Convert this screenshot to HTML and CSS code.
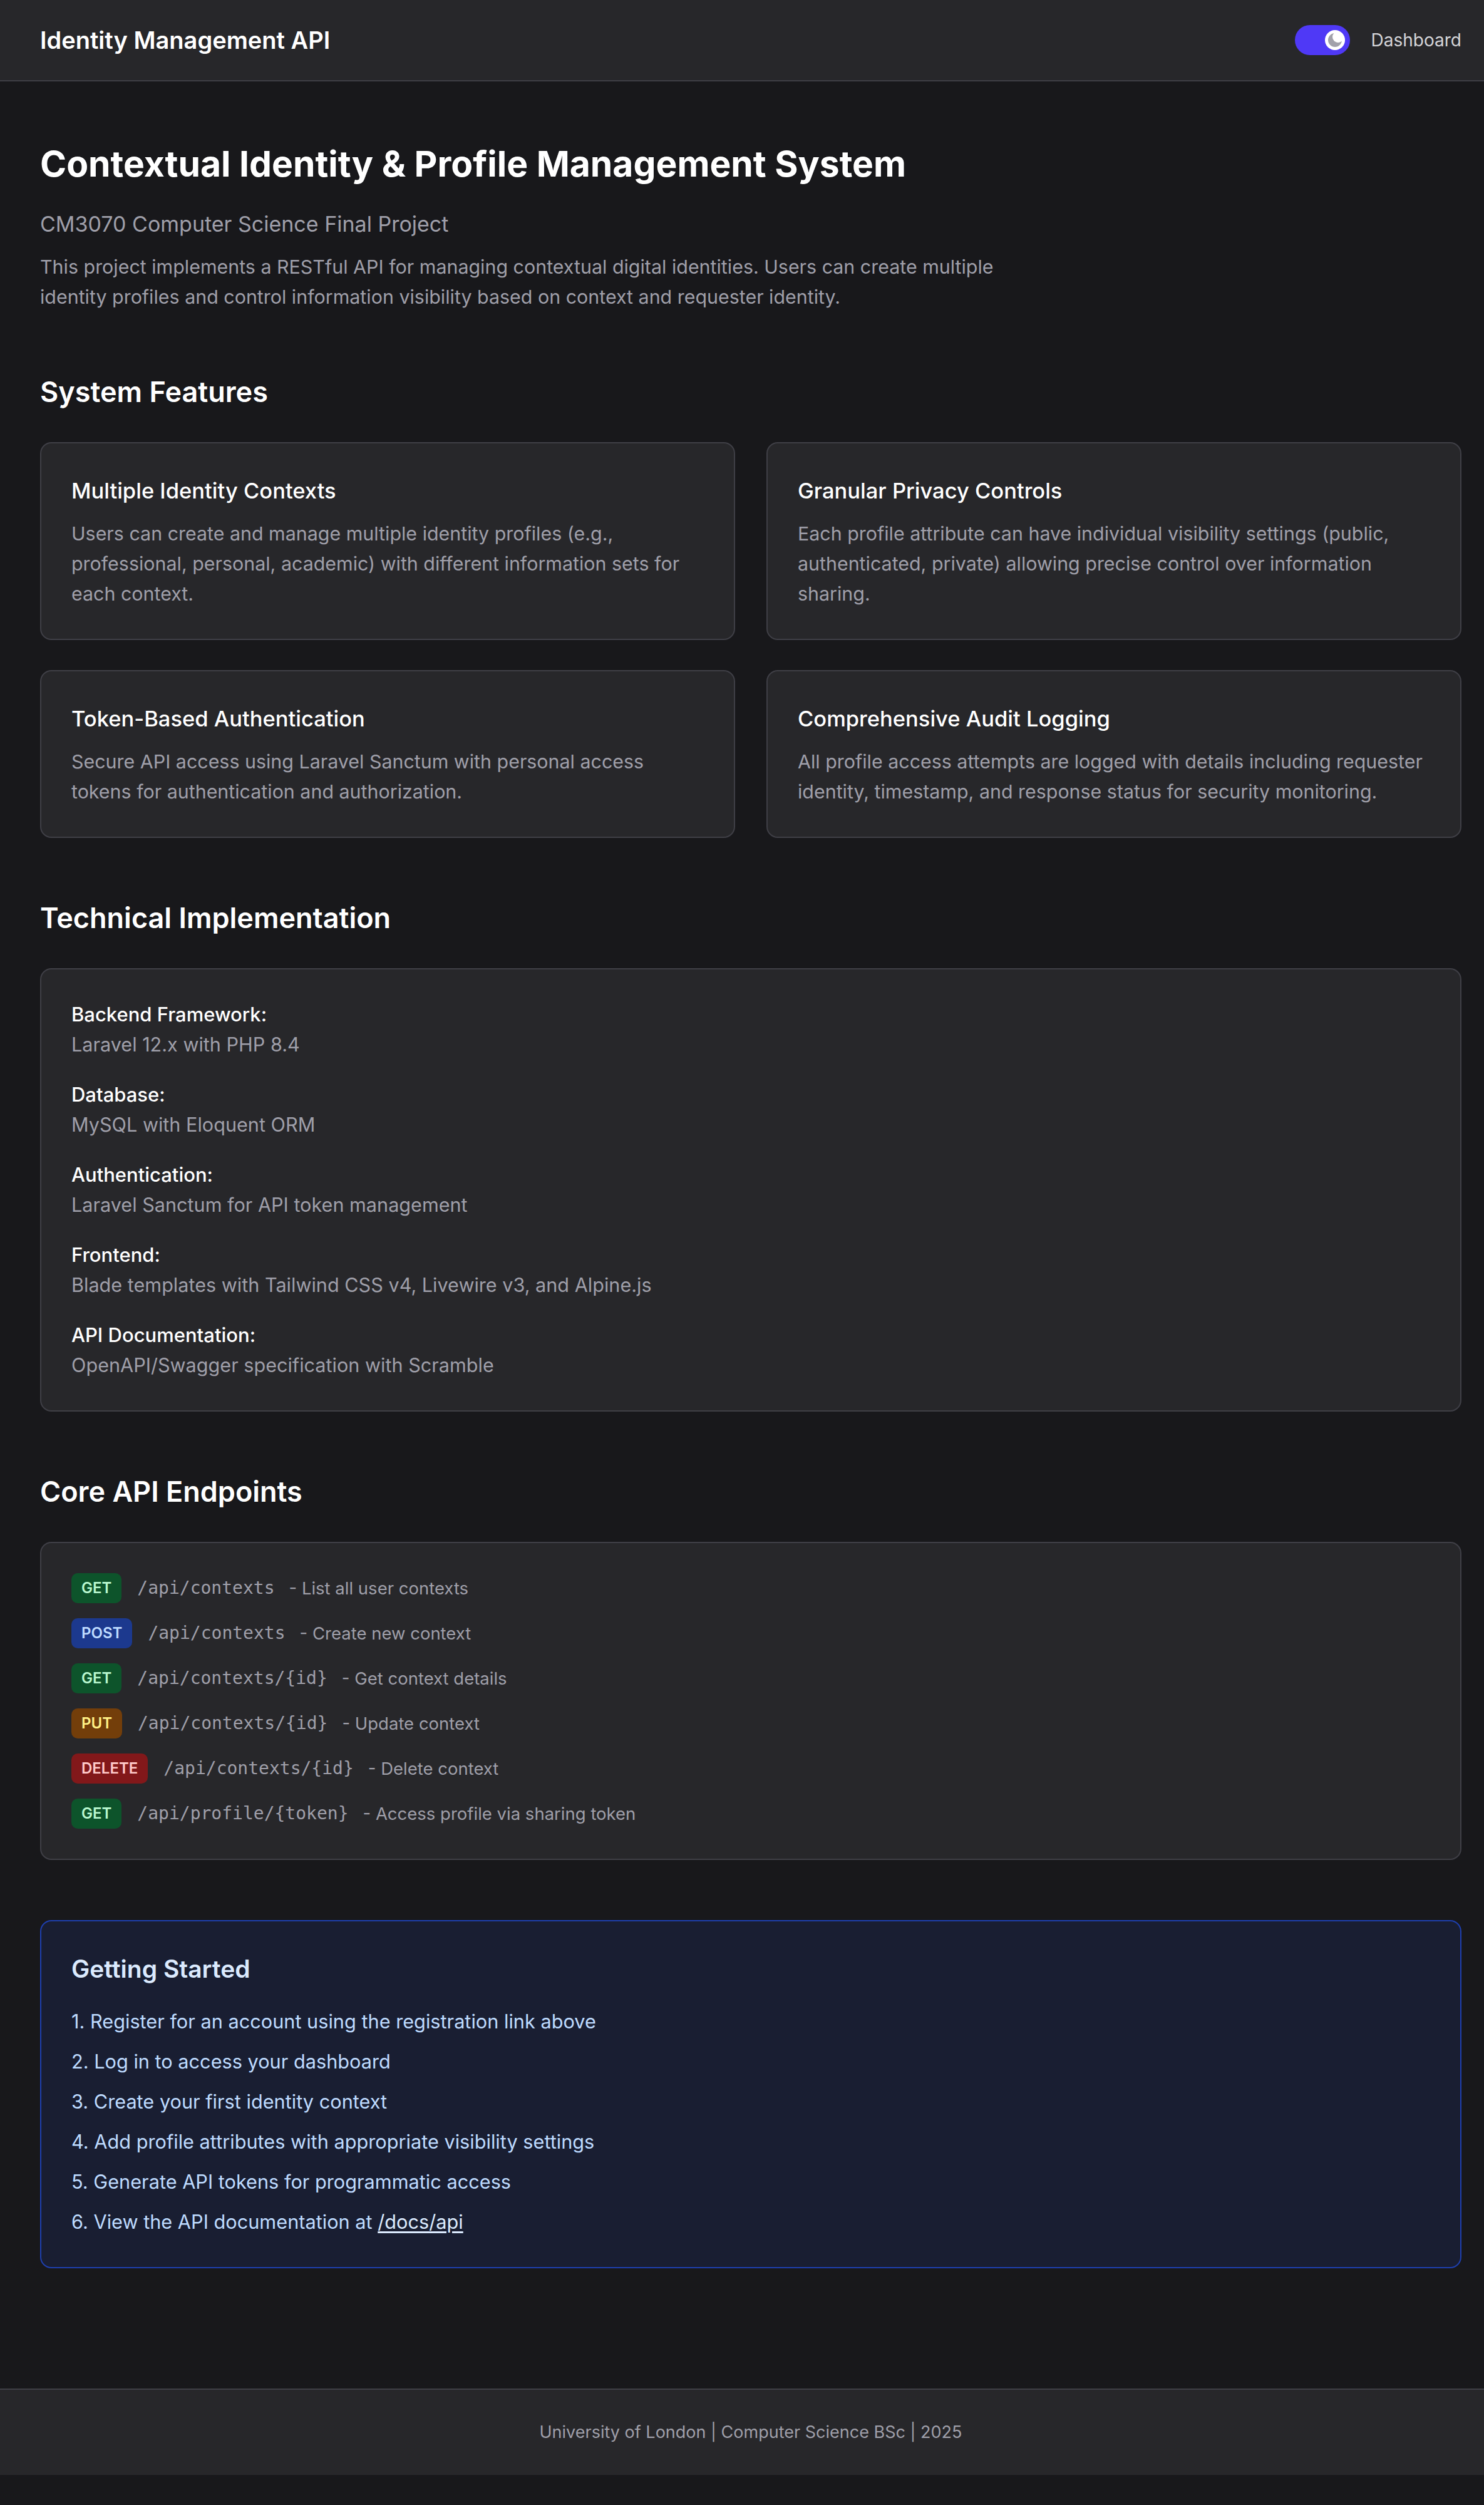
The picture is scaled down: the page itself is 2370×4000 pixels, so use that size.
FILE: index.html
```html
<!DOCTYPE html>
<html lang="en">
<head>
<meta charset="utf-8">
<title>Identity Management API</title>
<link rel="stylesheet" href="styles.css">
</head>
<body>
<header class="topbar">
  <div class="topbar-inner">
    <a class="brand" href="#">Identity Management API</a>
    <div class="nav">
      <button class="toggle" type="button" aria-label="Toggle dark mode">
        <span class="knob">
          <svg viewBox="0 0 24 24" width="24" height="24" aria-hidden="true">
            <circle cx="12" cy="12" r="11" fill="#a1a1aa"/>
            <circle cx="17" cy="7" r="9" fill="#ffffff"/>
          </svg>
        </span>
      </button>
      <a class="nav-link" href="#">Dashboard</a>
    </div>
  </div>
</header>

<main class="main">
  <section class="intro">
    <h1 class="title">Contextual Identity &amp; Profile Management System</h1>
    <p class="subtitle">CM3070 Computer Science Final Project</p>
    <p class="lead">This project implements a RESTful API for managing contextual digital identities. Users can create multiple identity profiles and control information visibility based on context and requester identity.</p>
  </section>

  <section class="section">
    <h2 class="section-title">System Features</h2>
    <div class="feature-grid">
      <div class="card">
        <h3 class="card-title">Multiple Identity Contexts</h3>
        <p class="card-text">Users can create and manage multiple identity profiles (e.g., professional, personal, academic) with different information sets for each context.</p>
      </div>
      <div class="card">
        <h3 class="card-title">Granular Privacy Controls</h3>
        <p class="card-text">Each profile attribute can have individual visibility settings (public, authenticated, private) allowing precise control over information sharing.</p>
      </div>
      <div class="card">
        <h3 class="card-title">Token-Based Authentication</h3>
        <p class="card-text">Secure API access using Laravel Sanctum with personal access tokens for authentication and authorization.</p>
      </div>
      <div class="card">
        <h3 class="card-title">Comprehensive Audit Logging</h3>
        <p class="card-text">All profile access attempts are logged with details including requester identity, timestamp, and response status for security monitoring.</p>
      </div>
    </div>
  </section>

  <section class="section">
    <h2 class="section-title">Technical Implementation</h2>
    <div class="panel tech-list">
      <div class="tech-item">
        <div class="tech-label">Backend Framework:</div>
        <div class="tech-value">Laravel 12.x with PHP 8.4</div>
      </div>
      <div class="tech-item">
        <div class="tech-label">Database:</div>
        <div class="tech-value">MySQL with Eloquent ORM</div>
      </div>
      <div class="tech-item">
        <div class="tech-label">Authentication:</div>
        <div class="tech-value">Laravel Sanctum for API token management</div>
      </div>
      <div class="tech-item">
        <div class="tech-label">Frontend:</div>
        <div class="tech-value">Blade templates with Tailwind CSS v4, Livewire v3, and Alpine.js</div>
      </div>
      <div class="tech-item">
        <div class="tech-label">API Documentation:</div>
        <div class="tech-value">OpenAPI/Swagger specification with Scramble</div>
      </div>
    </div>
  </section>

  <section class="section">
    <h2 class="section-title">Core API Endpoints</h2>
    <div class="panel endpoint-list">
      <div class="endpoint">
        <span class="method method-get">GET</span>
        <code class="path">/api/contexts</code>
        <span class="desc">- List all user contexts</span>
      </div>
      <div class="endpoint">
        <span class="method method-post">POST</span>
        <code class="path">/api/contexts</code>
        <span class="desc">- Create new context</span>
      </div>
      <div class="endpoint">
        <span class="method method-get">GET</span>
        <code class="path">/api/contexts/{id}</code>
        <span class="desc">- Get context details</span>
      </div>
      <div class="endpoint">
        <span class="method method-put">PUT</span>
        <code class="path">/api/contexts/{id}</code>
        <span class="desc">- Update context</span>
      </div>
      <div class="endpoint">
        <span class="method method-delete">DELETE</span>
        <code class="path">/api/contexts/{id}</code>
        <span class="desc">- Delete context</span>
      </div>
      <div class="endpoint">
        <span class="method method-get">GET</span>
        <code class="path">/api/profile/{token}</code>
        <span class="desc">- Access profile via sharing token</span>
      </div>
    </div>
  </section>

  <section class="section">
    <div class="getting-started">
      <h2 class="gs-title">Getting Started</h2>
      <ol class="gs-list">
        <li>1. Register for an account using the registration link above</li>
        <li>2. Log in to access your dashboard</li>
        <li>3. Create your first identity context</li>
        <li>4. Add profile attributes with appropriate visibility settings</li>
        <li>5. Generate API tokens for programmatic access</li>
        <li>6. View the API documentation at <a class="gs-link" href="#">/docs/api</a></li>
      </ol>
    </div>
  </section>
</main>

<footer class="footer">
  <div class="footer-inner">University of London | Computer Science BSc | 2025</div>
</footer>
</body>
</html>
```

FILE: styles.css
```css
* {
  box-sizing: border-box;
}

html,
body {
  margin: 0;
  padding: 0;
  background: #18181b;
}

body {
  font-family: Inter, "Noto Sans", "Liberation Sans", sans-serif;
  color: #fafafa;
  -webkit-font-smoothing: antialiased;
}

a {
  color: inherit;
  text-decoration: none;
}

h1, h2, h3, p, ol {
  margin: 0;
  padding: 0;
}

/* Header */
.topbar {
  background: #27272a;
  border-bottom: 2px solid #3f3f46;
}

.topbar-inner {
  height: 128px;
  padding: 0 36px 0 64px;
  display: flex;
  align-items: center;
  justify-content: space-between;
}

.brand {
  font-size: 38px;
  line-height: 56px;
  font-weight: 600;
  color: #ffffff;
}

.nav {
  display: flex;
  align-items: center;
  gap: 34px;
}

.toggle {
  width: 88px;
  height: 48px;
  border: 0;
  padding: 0 8px 0 0;
  border-radius: 24px;
  background: #4f39f6;
  display: flex;
  align-items: center;
  justify-content: flex-end;
  cursor: pointer;
}

.knob {
  width: 32px;
  height: 32px;
  border-radius: 50%;
  background: #ffffff;
  display: flex;
  align-items: center;
  justify-content: center;
  overflow: hidden;
}

.knob svg {
  display: block;
}

.nav-link {
  font-size: 28px;
  line-height: 40px;
  color: #d4d4d8;
}

/* Main */
.main {
  padding: 96px 36px 192px 64px;
}

.title {
  font-size: 57px;
  line-height: 72px;
  font-weight: 700;
  color: #ffffff;
  margin-bottom: 32px;
}

.subtitle {
  font-size: 34px;
  line-height: 56px;
  color: #9f9fa9;
  margin-bottom: 16px;
}

.lead {
  font-size: 30.4px;
  line-height: 48px;
  color: #9f9fa9;
  max-width: 1600px;
}

.section {
  margin-top: 96px;
}

.section-title {
  font-size: 45px;
  line-height: 64px;
  font-weight: 600;
  color: #ffffff;
  margin-bottom: 48px;
}

.feature-grid {
  display: grid;
  grid-template-columns: 1fr 1fr;
  gap: 48px 50px;
}

.card,
.panel {
  background: #27272a;
  border: 2px solid #3f3f46;
  border-radius: 18px;
  padding: 48px;
}

.card {
  padding-right: 40px;
}

.card-title {
  font-size: 34.5px;
  line-height: 56px;
  font-weight: 500;
  color: #ffffff;
  margin-bottom: 16px;
}

.card-text {
  font-size: 30.4px;
  line-height: 48px;
  color: #9f9fa9;
}

/* Technical list */
.tech-list {
  display: flex;
  flex-direction: column;
  gap: 32px;
}

.tech-label {
  font-size: 31px;
  line-height: 48px;
  font-weight: 500;
  color: #ffffff;
}

.tech-value {
  font-size: 30.6px;
  line-height: 48px;
  color: #9f9fa9;
}

/* Endpoints */
.endpoint-list {
  display: flex;
  flex-direction: column;
  gap: 24px;
}

.endpoint {
  display: flex;
  align-items: center;
  height: 48px;
}

.method {
  font-size: 24px;
  line-height: 32px;
  font-weight: 600;
  padding: 8px 16px;
  border-radius: 10px;
}

.method-get {
  background: #0d542b;
  color: #b9f8cf;
}

.method-post {
  background: #1c398e;
  color: #bedbff;
}

.method-put {
  background: #733e0a;
  color: #fff085;
}

.method-delete {
  background: #82181a;
  color: #ffc9c9;
}

.path {
  font-family: "DejaVu Sans Mono", "Liberation Mono", monospace;
  font-size: 28px;
  line-height: 40px;
  color: #9f9fa9;
  margin-left: 25px;
}

.desc {
  font-size: 27.5px;
  line-height: 40px;
  color: #9f9fa9;
  margin-left: 23px;
}

/* Getting started */
.getting-started {
  background: #191e32;
  border: 2px solid #1e3fae;
  border-radius: 18px;
  padding: 48px;
}

.gs-title {
  font-size: 39px;
  line-height: 56px;
  font-weight: 600;
  color: #dbeafe;
  margin-bottom: 32px;
}

.gs-list {
  list-style: none;
  display: flex;
  flex-direction: column;
  gap: 16px;
}

.gs-list li {
  font-size: 30.7px;
  line-height: 48px;
  color: #bedbff;
}

.gs-link {
  text-decoration: underline;
  text-underline-offset: 4px;
  color: #dbeafe;
}

/* Footer */
.footer {
  background: #27272a;
  border-top: 2px solid #3f3f46;
}

.footer-inner {
  padding: 48px 36px 48px 64px;
  text-align: center;
  font-size: 27px;
  line-height: 40px;
  color: #9f9fa9;
}
```
